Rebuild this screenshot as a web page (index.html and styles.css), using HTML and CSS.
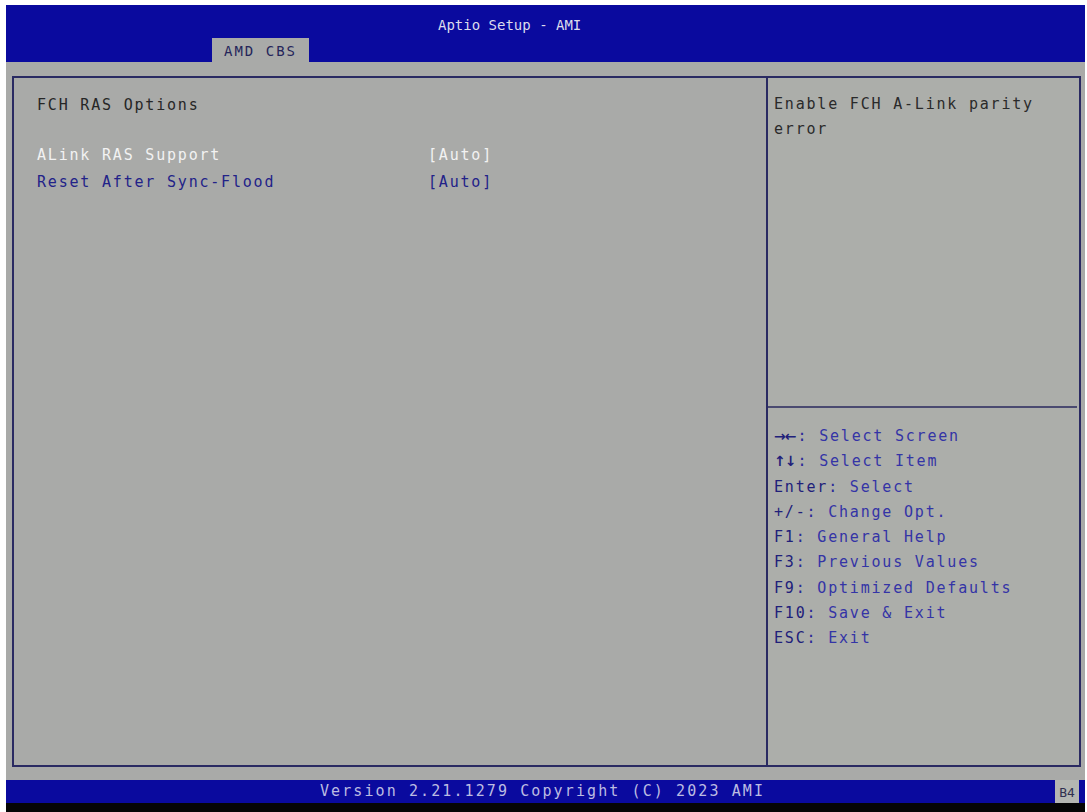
FILE: index.html
```html
<!DOCTYPE html>
<html>
<head>
<meta charset="utf-8">
<title>Aptio Setup - AMI</title>
<link rel="stylesheet" href="styles.css">
</head>
<body>
<div class="screen">
  <header class="header">
    <div class="title">Aptio Setup - AMI</div>
    <div class="tabs"><div class="tab">AMD CBS</div></div>
  </header>
  <main class="main">
    <div class="frame">
      <section class="left">
        <div class="heading">FCH RAS Options</div>
        <div class="items">
          <div class="item selected"><span class="label">ALink RAS Support</span><span class="value">[Auto]</span></div>
          <div class="item"><span class="label">Reset After Sync-Flood</span><span class="value">[Auto]</span></div>
        </div>
      </section>
      <aside class="right">
        <div class="help">Enable FCH A-Link parity<br>error</div>
        <div class="keys">
          <div class="key"><span class="k arrows">→←</span>: <span class="d">Select Screen</span></div>
          <div class="key"><span class="k arrows">↑↓</span>: <span class="d">Select Item</span></div>
          <div class="key"><span class="k">Enter</span>: <span class="d">Select</span></div>
          <div class="key"><span class="k">+/-</span>: <span class="d">Change Opt.</span></div>
          <div class="key"><span class="k">F1</span>: <span class="d">General Help</span></div>
          <div class="key"><span class="k">F3</span>: <span class="d">Previous Values</span></div>
          <div class="key"><span class="k">F9</span>: <span class="d">Optimized Defaults</span></div>
          <div class="key"><span class="k">F10</span>: <span class="d">Save &amp; Exit</span></div>
          <div class="key"><span class="k">ESC</span>: <span class="d">Exit</span></div>
        </div>
      </aside>
    </div>
  </main>
  <footer class="footer">
    <div class="version">Version 2.21.1279 Copyright (C) 2023 AMI</div>
    <div class="badge">B4</div>
  </footer>
  <div class="blackbar"></div>
</div>
</body>
</html>
```
FILE: styles.css
```css
html, body {
  margin: 0;
  padding: 0;
  background: #ffffff;
}
body {
  font-family: "DejaVu Sans Mono", "Liberation Mono", monospace;
  font-size: 15px;
  letter-spacing: 1.8px;
  overflow: hidden;
}
.screen {
  margin: 5px 2px 0 6px;
  width: 1079px;
  height: 807px;
  display: flex;
  flex-direction: column;
}
.header {
  height: 57px;
  background: #0a0a9e;
  display: flex;
  flex-direction: column;
  justify-content: space-between;
}
.title {
  color: #dcdcec;
  padding-top: 11px;
  padding-left: 432px;
  line-height: 18px;
  font-size: 14px;
  letter-spacing: 0;
}
.tabs {
  display: flex;
  padding-left: 206px;
}
.tab {
  width: 97px;
  height: 24px;
  background: #a9aaa8;
  color: #25255a;
  font-size: 14px;
  letter-spacing: 2px;
  line-height: 26px;
  box-sizing: border-box;
  padding-left: 12px;
}
.main {
  flex: 1;
  background: #a9aaa8;
  padding: 14px 4px 13px 6px;
  display: flex;
}
.frame {
  flex: 1;
  border: 2px solid #2a2a62;
  display: flex;
}
.left {
  width: 754px;
  border-right: 2px solid #2a2a62;
  padding: 14px 0 0 23px;
  box-sizing: border-box;
}
.heading {
  color: #262626;
  line-height: 26px;
  margin-bottom: 24px;
}
.item {
  display: flex;
  line-height: 27px;
  color: #222288;
}
.item.selected {
  color: #f2f2f2;
}
.label {
  width: 391px;
}
.right {
  flex: 1;
  display: flex;
  flex-direction: column;
  background: #acaeaa;
}
.help {
  height: 330px;
  padding: 14px 0 0 6px;
  line-height: 25px;
  color: #2a2a2a;
  border-bottom: 2px solid #4a4a70;
  margin-right: 2px;
  box-sizing: border-box;
}
.keys {
  padding: 16px 0 0 6px;
  color: #2a2a98;
}
.key {
  line-height: 25.3px;
}
.k {
  color: #20207a;
}
.arrows {
  font-family: "DejaVu Sans", sans-serif;
  font-weight: bold;
  font-size: 14px;
  letter-spacing: -1px;
  margin-right: 2px;
}
.d {
  color: #3434a6;
}
.footer {
  height: 23px;
  background: #0a0a9e;
  display: flex;
  align-items: center;
}
.version {
  flex: 1;
  text-align: center;
  color: #bcbce2;
  padding-left: 24px;
  line-height: 23px;
  letter-spacing: 2.1px;
}
.badge {
  width: 24px;
  height: 23px;
  background: #b4b6b2;
  color: #303050;
  font-size: 13px;
  letter-spacing: 0;
  line-height: 25px;
  text-align: center;
  margin-right: 6px;
}
.blackbar {
  height: 9px;
  background: #050505;
}
```
